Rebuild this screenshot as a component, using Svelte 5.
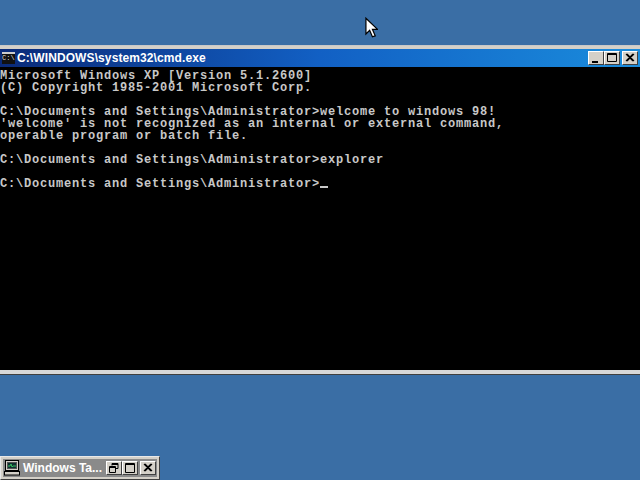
<script>
  const lines = [
    'Microsoft Windows XP [Version 5.1.2600]',
    '(C) Copyright 1985-2001 Microsoft Corp.',
    '',
    'C:\\Documents and Settings\\Administrator>welcome to windows 98!',
    "'welcome' is not recognized as an internal or external command,",
    'operable program or batch file.',
    '',
    'C:\\Documents and Settings\\Administrator>explorer',
    '',
  ];
</script>

<div class="desktop">
  <section class="window">
    <header class="titlebar">
      <div class="sysicon">C:\</div>
      <div class="title">C:\WINDOWS\system32\cmd.exe</div>
      <div class="buttons">
        <button aria-label="Minimize"><svg viewBox="0 0 14 12"><path d="M3 9h6v2H3z" fill="#000"/></svg></button>
        <button aria-label="Maximize"><svg viewBox="0 0 14 12"><path d="M2.5 1.5h9v8h-9zM2.5 2.5h9" fill="none" stroke="#000"/></svg></button>
        <button class="close" aria-label="Close"><svg viewBox="0 0 14 12"><path d="M3 2l7 7M4 2l7 7M10 2l-7 7M11 2l-7 7" fill="none" stroke="#000" stroke-width="1.1"/></svg></button>
      </div>
    </header>
    <div class="console">
      {#each lines as line}
        <div class="line">{line}</div>
      {/each}
      <div class="line">C:\Documents and Settings\Administrator&gt;<span class="caret"></span></div>
    </div>
    <div class="bottom-edge"></div>
  </section>

  <div class="spacer"></div>

  <div class="mini">
    <div class="mini-row">
      <svg class="mini-icon" viewBox="0 0 18 18">
        <rect x="2.5" y="1.5" width="13" height="10" fill="#d4d0c8" stroke="#000"/>
        <rect x="4.5" y="3.5" width="9" height="6" fill="#103030" stroke="#555"/>
        <path d="M5 7h2l1-2 1 3 1-1h3" fill="none" stroke="#3fdc6a" stroke-width=".8"/>
        <rect x="1.5" y="12.500" width="15" height="3.500" fill="#d4d0c8" stroke="#000"/>
      </svg>
      <div class="mini-title">Windows Ta...</div>
      <div class="mini-buttons">
        <button aria-label="Restore"><svg viewBox="0 0 14 12"><path d="M5 3.500V1.500h6v5H9M5 2.500h6M2.500 4.500h6v6h-6zM2.500 5.500h6" fill="none" stroke="#000"/></svg></button>
        <button aria-label="Maximize"><svg viewBox="0 0 14 12"><path d="M2.500 1.500h9v9h-9zM2.500 2.500h9" fill="none" stroke="#000"/></svg></button>
        <button class="close" aria-label="Close"><svg viewBox="0 0 14 12"><path d="M3 2l7 7M4 2l7 7M10 2l-7 7M11 2l-7 7" fill="none" stroke="#000" stroke-width="1.1"/></svg></button>
      </div>
    </div>
  </div>

  <svg class="pointer" viewBox="0 0 14 22" aria-hidden="true">
    <path d="M1 1v17l4-4 3 7 3-1-3-7h5.500z" fill="#fff" stroke="#000" stroke-width="1.300"/>
  </svg>
</div>

<style>
  :global(body) {
    margin: 0;
    background: #3a6ea5;
  }
  .desktop {
    position: relative;
    width: 640px;
    height: 480px;
    overflow: hidden;
    display: flex;
    flex-direction: column;
    background: #3a6ea5;
    box-sizing: border-box;
    padding-top: 45px;
  }
  .window {
    display: flex;
    flex-direction: column;
    background: #d4d0c8;
    border-top: 1px solid #c8c8c8;
    box-sizing: border-box;
    height: 330px;
  }
  .titlebar {
    display: flex;
    align-items: center;
    height: 18px;
    margin-top: 3px;
    flex: none;
    background: linear-gradient(to right, #0a2a78 0%, #1260c4 50%, #1a8cdc 100%);
    color: #fff;
  }
  .sysicon {
    width: 13px;
    height: 10px;
    margin: 0 2px 0 2px;
    background: #111;
    color: #ddd;
    border-top: 2px solid #ccc;
    font: 7px/9px "Liberation Mono", monospace;
    overflow: hidden;
    flex: none;
  }
  .title {
    flex: 1;
    font: 700 12px "Liberation Sans", sans-serif;
    letter-spacing: 0.1px;
  }
  .buttons {
    display: flex;
    margin-right: 2px;
  }
  .mini-buttons {
    display: flex;
    align-items: center;
    padding-right: 1px;
  }
  .close { margin-left: 2px; }
  button {
    width: 16px;
    height: 14px;
    padding: 0;
    box-sizing: border-box;
    background: #d4d0c8;
    border: 1px solid;
    border-color: #fff #404040 #404040 #fff;
    display: flex;
    align-items: center;
    justify-content: center;
  }
  button svg {
    width: 14px;
    height: 12px;
    display: block;
  }
  .console {
    flex: 1;
    background: #000;
    color: #c8c8c8;
    font: 700 12px/12px "Liberation Mono", monospace;
    letter-spacing: 0.8px;
    padding-top: 3px;
    overflow: hidden;
  }
  .line {
    height: 12px;
    white-space: pre;
  }
  .caret {
    display: inline-block;
    width: 8px;
    height: 2px;
    background: #c8c8c8;
    vertical-align: -1px;
  }
  .bottom-edge {
    height: 4px;
    background: #d8d8d8;
    border-bottom: 1px solid #404040;
    flex: none;
  }
  .spacer {
    flex: 1;
  }
  .mini {
    width: 160px;
    height: 24px;
    box-sizing: border-box;
    background: #d4d0c8;
    border: 1px solid;
    border-color: #e8e8e8 #404040 #404040 #e8e8e8;
    padding: 2px;
    display: flex;
  }
  .mini-row {
    flex: 1;
    display: flex;
    align-items: center;
    background: #8a8a8a;
  }
  .mini-icon {
    width: 18px;
    height: 18px;
    margin-right: 2px;
    flex: none;
  }
  .mini-title {
    flex: 1;
    color: #fff;
    font: 700 12px/18px "Liberation Sans", sans-serif;
    white-space: nowrap;
  }
  .pointer {
    position: absolute;
    left: 365px;
    top: 17px;
    width: 13px;
    height: 21px;
  }
</style>
